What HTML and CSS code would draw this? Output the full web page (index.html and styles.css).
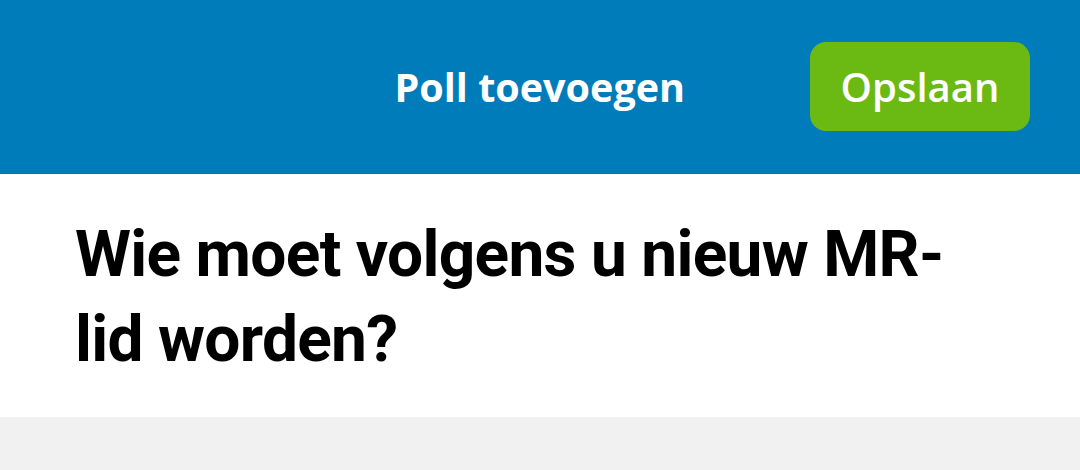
FILE: index.html
```html
<!DOCTYPE html>
<html lang="nl">
<head>
    <meta charset="UTF-8">
    <meta name="viewport" content="width=device-width, initial-scale=1.0">
    <title>Poll toevoegen</title>
    <link rel="stylesheet" href="styles.css">
</head>
<body>
    <header class="topbar">
        <h2 class="topbar-title">Poll toevoegen</h2>
        <button class="btn-save">Opslaan</button>
    </header>

    <section class="question">
        <h1>Wie moet volgens u nieuw MR-lid worden?</h1>
    </section>

    <div class="rest"></div>
</body>
</html>
```

FILE: styles.css
```css
body {
    margin: 0;
    padding: 0;
    background: #f1f1f1;
    font-family: 'Open Sans', sans-serif;
}

.topbar {
    height: 174px;
    background: #007cbb;
    display: flex;
    align-items: center;
    justify-content: flex-end;
    padding: 0 50px 0 0;
    box-sizing: border-box;
}

.topbar-title {
    margin: 0 125px 0 0;
    color: #fff;
    font-size: 39.5px;
    font-weight: 700;
}

.btn-save {
    width: 220px;
    height: 89px;
    margin-top: -2px;
    background: #6bba14;
    color: #fff;
    border: none;
    border-radius: 16px;
    font-family: 'Open Sans', sans-serif;
    font-size: 40px;
    font-weight: 600;
    cursor: pointer;
}

.question {
    background: #fff;
    height: 243px;
    padding: 0 120px 0 75px;
    box-sizing: border-box;
    overflow: hidden;
}

.question h1 {
    margin: 0;
    padding-top: 38px;
    font-family: 'Roboto', sans-serif;
    font-size: 64px;
    line-height: 85px;
    letter-spacing: -0.7px;
    font-weight: 700;
    color: #000;
}
```
